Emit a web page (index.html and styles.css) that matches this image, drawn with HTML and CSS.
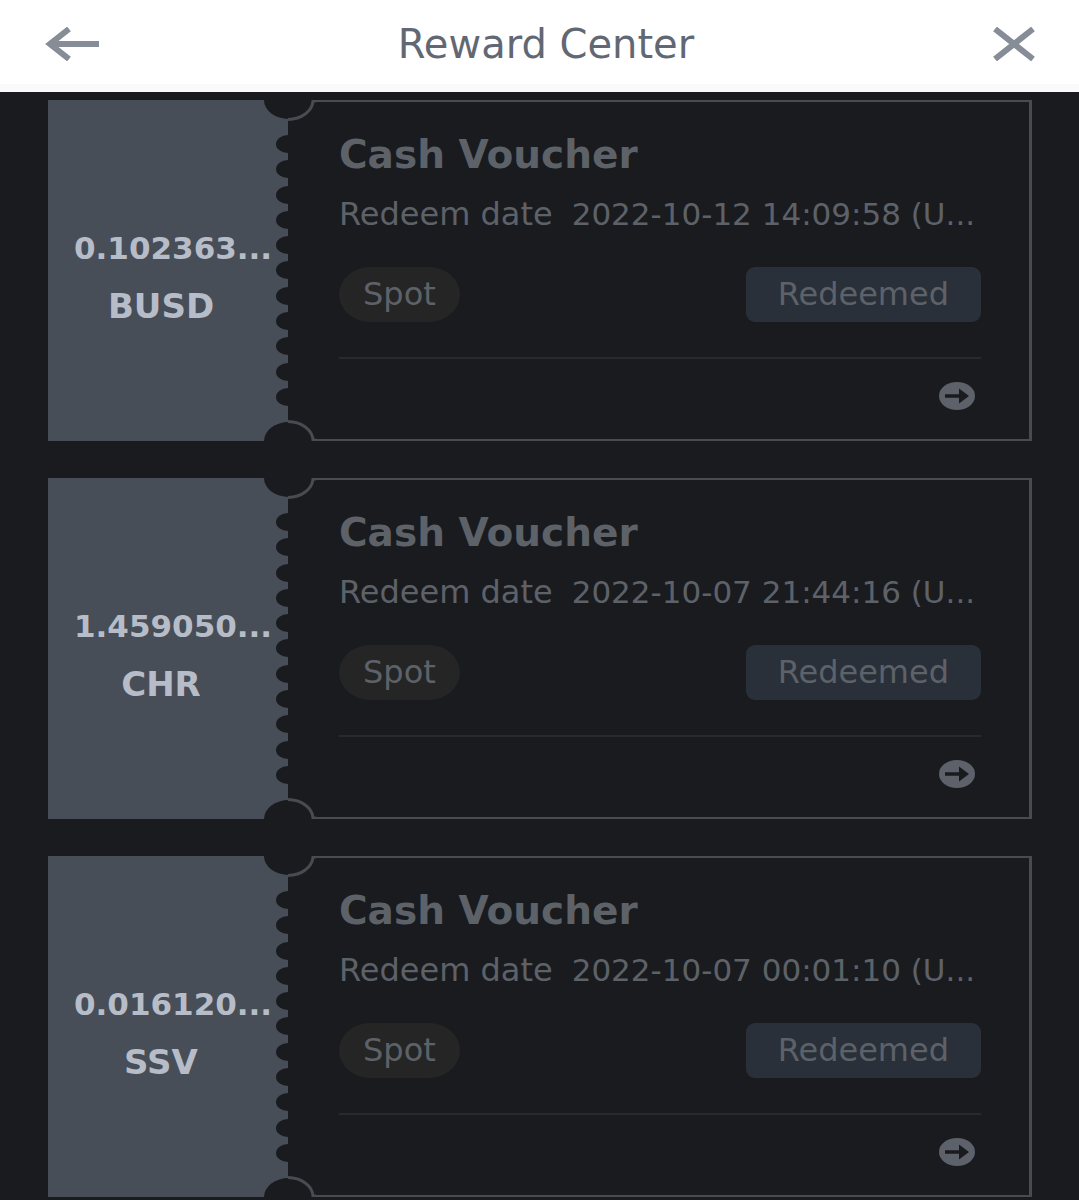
FILE: index.html
```html
<!DOCTYPE html>
<html lang="en">
<head>
<meta charset="utf-8">
<meta name="viewport" content="width=device-width, initial-scale=1">
<title>Reward Center</title>
<link rel="stylesheet" href="styles.css">
</head>
<body>
<svg class="symbols" aria-hidden="true">
  <symbol id="notch" viewBox="0 0 52 22">
    <path class="notch-fill" d="M0 0A25 19 0 0 0 50 0Z"/>
    <path class="notch-edge" d="M24 19.500A25.500 19.500 0 0 0 49 1H52"/>
  </symbol>
  <symbol id="go" viewBox="0 0 36 28">
    <ellipse class="go-disc" cx="18" cy="14" rx="18" ry="14"/>
    <path class="go-arrow" d="M6 12.200H20V6.500L30 14L20 21.500V15.800H6Z"/>
  </symbol>
</svg>
<header class="topbar">
  <button class="icon-button" type="button" aria-label="Back">
    <svg width="54" height="34" viewBox="0 0 54 34"><path class="stroke" d="M24 2L5 17L24 32M5 17H54"/></svg>
  </button>
  <h1 class="topbar-title">Reward Center</h1>
  <button class="icon-button" type="button" aria-label="Close">
    <svg width="42" height="34" viewBox="0 0 42 34"><path class="stroke" d="M2 2L40 32M40 2L2 32"/></svg>
  </button>
</header>
<main class="vouchers">
  <article class="voucher">
    <div class="stub">
      <p class="amount">0.102363...</p>
      <p class="amount coin">BUSD</p>
      <div class="perforation"><i></i><i></i><i></i><i></i><i></i><i></i><i></i><i></i><i></i><i></i><i></i></div>
    </div>
    <div class="details">
      <h2 class="title">Cash Voucher</h2>
      <p class="redeem"><span>Redeem date</span><time class="date">2022-10-12 14:09:58 (U...</time></p>
      <div class="status"><span class="tag">Spot</span><button class="redeemed" type="button">Redeemed</button></div>
      <div class="more"><button class="go" type="button" aria-label="View details"><svg width="36" height="28"><use href="#go"/></svg></button></div>
    </div>
    <svg class="notch notch-top" width="52" height="22"><use href="#notch"/></svg>
    <svg class="notch notch-bottom" width="52" height="22"><use href="#notch"/></svg>
  </article>
  <article class="voucher">
    <div class="stub">
      <p class="amount">1.459050...</p>
      <p class="amount coin">CHR</p>
      <div class="perforation"><i></i><i></i><i></i><i></i><i></i><i></i><i></i><i></i><i></i><i></i><i></i></div>
    </div>
    <div class="details">
      <h2 class="title">Cash Voucher</h2>
      <p class="redeem"><span>Redeem date</span><time class="date">2022-10-07 21:44:16 (U...</time></p>
      <div class="status"><span class="tag">Spot</span><button class="redeemed" type="button">Redeemed</button></div>
      <div class="more"><button class="go" type="button" aria-label="View details"><svg width="36" height="28"><use href="#go"/></svg></button></div>
    </div>
    <svg class="notch notch-top" width="52" height="22"><use href="#notch"/></svg>
    <svg class="notch notch-bottom" width="52" height="22"><use href="#notch"/></svg>
  </article>
  <article class="voucher">
    <div class="stub">
      <p class="amount">0.016120...</p>
      <p class="amount coin">SSV</p>
      <div class="perforation"><i></i><i></i><i></i><i></i><i></i><i></i><i></i><i></i><i></i><i></i><i></i></div>
    </div>
    <div class="details">
      <h2 class="title">Cash Voucher</h2>
      <p class="redeem"><span>Redeem date</span><time class="date">2022-10-07 00:01:10 (U...</time></p>
      <div class="status"><span class="tag">Spot</span><button class="redeemed" type="button">Redeemed</button></div>
      <div class="more"><button class="go" type="button" aria-label="View details"><svg width="36" height="28"><use href="#go"/></svg></button></div>
    </div>
    <svg class="notch notch-top" width="52" height="22"><use href="#notch"/></svg>
    <svg class="notch notch-bottom" width="52" height="22"><use href="#notch"/></svg>
  </article>
</main>
</body>
</html>
```
FILE: styles.css
```css
:root {
  --page: #1a1b1f;
  --stub: #474e57;
  --line: #494b50;
  --text: #5d6269;
}

* {
  box-sizing: border-box;
}

body {
  margin: 0;
  background: var(--page);
  color: var(--text);
  font-family: "DejaVu Sans", Verdana, sans-serif;
  font-size: 32px;
  line-height: 40px;
}

h1, h2, p {
  margin: 0;
}

button {
  padding: 0;
  border: 0;
  background: none;
  color: inherit;
  font: inherit;
  cursor: pointer;
}

svg {
  display: block;
}

.symbols {
  position: absolute;
  width: 0;
  height: 0;
}

.topbar {
  display: flex;
  align-items: center;
  justify-content: space-between;
  padding: 20px 44px 16px 45px;
  border-bottom: 8px solid #fafafb;
  background: #fff;
}

.topbar-title {
  color: #626873;
  font-size: 40px;
  font-weight: 400;
  line-height: 48px;
}

.stroke {
  fill: none;
  stroke: #878d96;
  stroke-width: 6;
}

.vouchers {
  display: grid;
  gap: 37px;
  padding: 8px 47px 0 48px;
}

.voucher {
  position: relative;
  display: grid;
  grid-template-columns: 240px minmax(0, 1fr);
}

.stub {
  position: relative;
  display: flex;
  flex-direction: column;
  justify-content: center;
  padding: 12px 40px 0 26px;
  background: var(--stub);
}

.amount {
  color: #b7bdc8;
  font-size: 31px;
  font-weight: 700;
  line-height: 58px;
  text-align: center;
  white-space: nowrap;
}

.coin {
  font-size: 34px;
}

.perforation {
  position: absolute;
  top: 35px;
  right: 0;
  bottom: 35px;
  display: flex;
  flex-direction: column;
  justify-content: space-between;
}

.perforation i {
  width: 12px;
  height: 18px;
  border-radius: 12px 0 0 12px / 9px 0 0 9px;
  background: var(--page);
}

.details {
  padding: 29px 48px 29px 51px;
  border: solid var(--line);
  border-width: 2px 3px 2px 0;
}

.title {
  font-size: 39px;
  font-weight: 700;
  line-height: 48px;
}

.redeem {
  display: flex;
  gap: 19px;
  margin-top: 15px;
  white-space: nowrap;
}

.date {
  overflow: hidden;
  min-width: 0;
  font-size: 31px;
  text-overflow: ellipsis;
}

.status {
  display: flex;
  justify-content: space-between;
  margin-top: 33px;
  padding-bottom: 35px;
  border-bottom: 2px solid #292a2e;
}

.tag {
  padding: 0 24px;
  border-radius: 32px / 28px;
  background: #252525;
  line-height: 55px;
}

.redeemed {
  padding: 0 32px;
  border-radius: 9px;
  background: #2a3039;
  line-height: 55px;
}

.more {
  display: flex;
  justify-content: flex-end;
  padding: 23px 6px 0 0;
}

.notch {
  position: absolute;
  left: 216px;
}

.notch-top {
  top: 0;
}

.notch-bottom {
  bottom: 0;
  transform: scaleY(-1);
}

.notch-fill {
  fill: var(--page);
}

.notch-edge {
  fill: none;
  stroke: var(--line);
  stroke-width: 3;
}

.go-disc {
  fill: #5d6169;
}

.go-arrow {
  fill: var(--page);
}
```
